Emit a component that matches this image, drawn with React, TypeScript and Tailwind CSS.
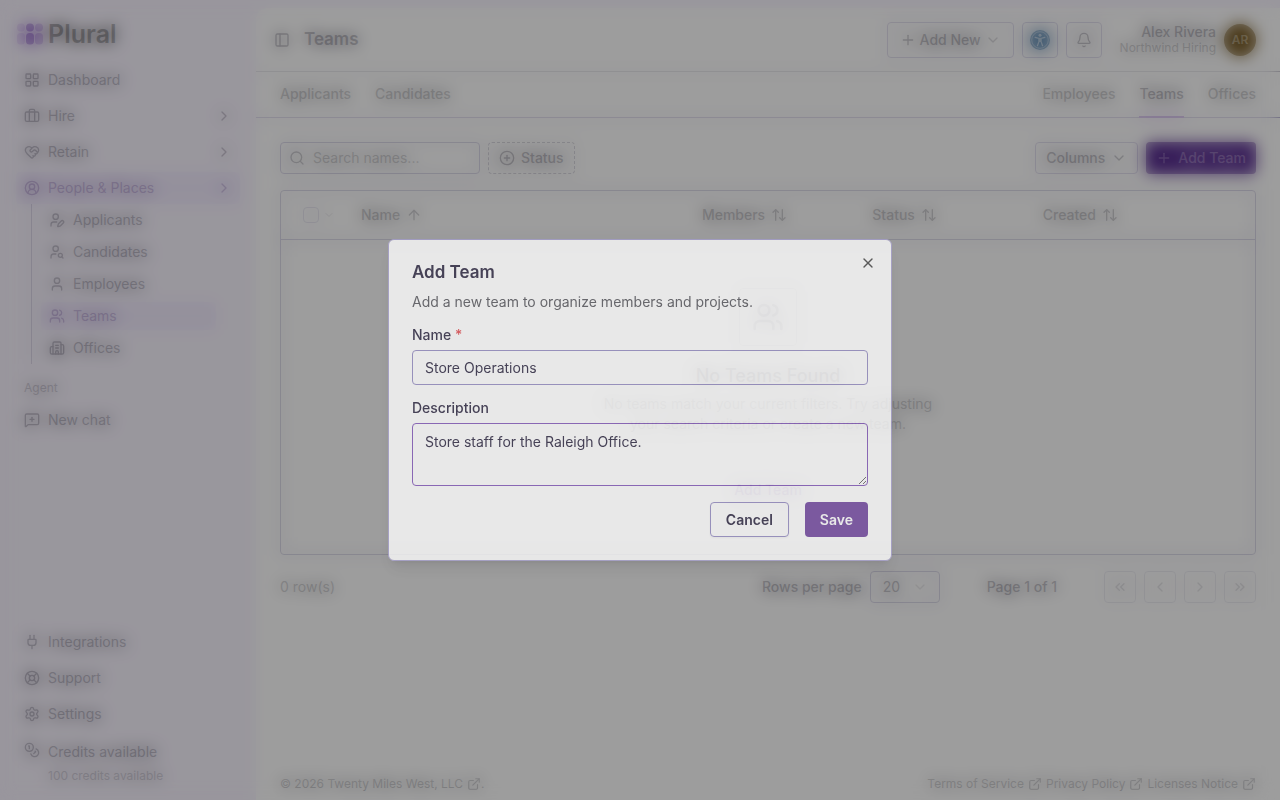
import type { ReactNode } from 'react'
import {
    ArrowUp,
    ArrowUpDown,
    Bell,
    Briefcase,
    Building2,
    ChevronDown,
    ChevronLeft,
    ChevronRight,
    ChevronsLeft,
    ChevronsRight,
    CirclePlus,
    CircleUserRound,
    Coins,
    ExternalLink,
    HeartHandshake,
    LayoutGrid,
    LifeBuoy,
    MessageSquarePlus,
    PanelLeft,
    Plug,
    Plus,
    Search,
    Settings,
    User,
    UserPen,
    UserSearch,
    Users,
    X,
    type LucideIcon,
} from 'lucide-react'

const mainNav = [
    { label: 'Dashboard', icon: LayoutGrid },
    { label: 'Hire', icon: Briefcase, expandable: true },
    { label: 'Retain', icon: HeartHandshake, expandable: true },
    { label: 'People & Places', icon: CircleUserRound, expandable: true, active: true },
]

const peopleNav = [
    { label: 'Applicants', icon: UserPen },
    { label: 'Candidates', icon: UserSearch },
    { label: 'Employees', icon: User },
    { label: 'Teams', icon: Users, active: true },
    { label: 'Offices', icon: Building2 },
]

const footerNav = [
    { label: 'Integrations', icon: Plug },
    { label: 'Support', icon: LifeBuoy },
    { label: 'Settings', icon: Settings },
]

export default function App() {
    return (
        <div className="flex min-h-screen bg-[#f8f4ff] font-['Inter',sans-serif] text-sm text-[#413d50]">
            <Sidebar />
            <div className="mt-2 flex min-w-0 flex-1 flex-col rounded-tl-xl bg-white">
                <Header />
                <TabBar />
                <main className="flex flex-1 flex-col px-6 pt-6">
                    <Toolbar />
                    <TeamsTable />
                    <Pagination />
                </main>
                <Footer />
            </div>

            {/* Overlay */}
            <div className="fixed inset-0 bg-black/50 opacity-[0.77] backdrop-blur-sm" />
            <AddTeamDialog />
        </div>
    )
}

function Sidebar() {
    return (
        <aside className="flex w-64 shrink-0 flex-col px-4 pb-3.5">
            <a href="#" className="flex h-16 items-center gap-1 pt-1 text-[#262626]">
                <LogoMark />
                <span className="text-[25px] leading-8 font-semibold">Plural</span>
            </a>
            <nav className="flex flex-col gap-1">
                {mainNav.map((item) => (
                    <NavItem key={item.label} {...item} />
                ))}
            </nav>
            <nav className="mr-4 ml-[15px] flex flex-col gap-1 border-l border-[#8f88a8] py-0.5 pr-2 pl-[9px]">
                {peopleNav.map(({ label, icon: Icon, active }) => (
                    <a
                        key={label}
                        href="#"
                        className={`flex h-7 items-center gap-2 rounded px-2 ${active ? 'bg-[#f0eafd] text-[#6f4a9c]' : ''}`}
                    >
                        <Icon className="size-4" />
                        {label}
                    </a>
                ))}
            </nav>
            <div className="mt-2 flex h-8 items-center px-2 text-xs text-[#6a6675]">Agent</div>
            <NavItem label="New chat" icon={MessageSquarePlus} />
            <div className="mt-auto flex flex-col gap-1">
                {footerNav.map((item) => (
                    <NavItem key={item.label} {...item} />
                ))}
                <a href="#" className="flex gap-2 px-2 pt-2">
                    <Coins className="size-4" />
                    <span className="flex flex-col gap-1">
                        <span className="leading-5">Credits available</span>
                        <span className="text-xs leading-5 text-[#7a7684]">100 credits available</span>
                    </span>
                </a>
            </div>
        </aside>
    )
}

function NavItem({ label, icon: Icon, expandable, active }: {
    label: string
    icon: LucideIcon
    expandable?: boolean
    active?: boolean
}) {
    return (
        <a
            href="#"
            className={`flex h-8 items-center gap-2 rounded px-2 ${active ? 'bg-[#f0eafd] text-[#6f4a9c]' : ''}`}
        >
            <Icon className="size-4" />
            <span className="flex-1">{label}</span>
            {expandable && <ChevronRight className="size-4" />}
        </a>
    )
}

function LogoMark() {
    return (
        <svg viewBox="0 0 28 22" className="h-[22px] w-7" aria-hidden="true">
            <g fill="#d3b8f0">
                <circle cx="5" cy="4.5" r="4" />
                <rect x="1" y="10" width="8" height="11.5" rx="3.5" />
            </g>
            <g fill="#b08be0">
                <circle cx="23" cy="4.5" r="4" />
                <rect x="19" y="10" width="8" height="11.5" rx="3.5" />
            </g>
            <g fill="#6a2fb0">
                <circle cx="14" cy="4.5" r="4" />
                <rect x="10" y="10" width="8" height="11.5" rx="3.5" />
            </g>
        </svg>
    )
}

function Header() {
    return (
        <header className="flex h-16 items-center gap-2 border-b border-[#b3b1be] pr-6 pl-[18px]">
            <button type="button" aria-label="Toggle sidebar" className="flex w-4 justify-center">
                <PanelLeft className="size-4" />
            </button>
            <h1 className="ml-1.5 flex-1 text-[17px] font-semibold">Teams</h1>
            <button type="button" className="flex h-9 items-center gap-1 rounded border border-[#968fc0] px-3 font-medium">
                <Plus className="size-4 shrink-0" />
                Add New
                <ChevronDown className="size-4 shrink-0 opacity-70" />
            </button>
            <button type="button" aria-label="Accessibility" className="flex size-9 items-center justify-center rounded border border-[#968fc0]">
                <svg viewBox="0 0 20 20" className="size-5" aria-hidden="true">
                    <circle cx="10" cy="10" r="10" fill="#0c4f8c" />
                    <circle cx="10" cy="10" r="8.3" fill="none" stroke="#d5e4f2" strokeWidth="0.7" />
                    <circle cx="10" cy="5.2" r="1.5" fill="#fff" />
                    <path d="M5.2 7.4l3.6 1h2.4l3.6-1M8.9 8.6v3l-1.4 4M11.1 8.6v3l1.4 4M10 8.6v3" fill="none" stroke="#fff" strokeWidth="1.3" strokeLinecap="round" strokeLinejoin="round" />
                </svg>
            </button>
            <button type="button" aria-label="Notifications" className="flex size-9 items-center justify-center rounded border border-[#968fc0]">
                <Bell className="size-4" />
            </button>
            <div className="ml-2.5 text-right">
                <div className="leading-4 font-medium">Alex Rivera</div>
                <div className="text-xs leading-4 text-[#6b6b73]">Northwind Hiring</div>
            </div>
            <button type="button" className="flex size-8 items-center justify-center rounded-full bg-[#5e3e00] text-xs font-semibold text-white">
                AR
            </button>
        </header>
    )
}

function TabLink({ children, active }: { children: ReactNode; active?: boolean }) {
    return (
        <a
            href="#"
            className={`-mb-px flex items-center border-b-2 ${active ? 'border-[#8a4fd0] text-[#413d50]' : 'border-transparent'}`}
        >
            {children}
        </a>
    )
}

function TabBar() {
    return (
        <nav className="flex h-[46px] justify-between border-b border-[#968fc0] px-6 font-medium text-[#6b6b73]">
            <div className="flex gap-6">
                <TabLink>Applicants</TabLink>
                <TabLink>Candidates</TabLink>
            </div>
            <div className="flex gap-6">
                <TabLink>Employees</TabLink>
                <TabLink active>Teams</TabLink>
                <TabLink>Offices</TabLink>
            </div>
        </nav>
    )
}

function Toolbar() {
    return (
        <div className="flex items-center gap-2 font-medium">
            <label className="flex h-8 w-[200px] items-center gap-2 rounded border border-[#7f78ac] px-2 font-normal">
                <Search className="size-4 shrink-0 text-[#55525f]" />
                <input
                    type="search"
                    aria-label="Search names"
                    placeholder="Search names..."
                    className="w-full min-w-0 bg-transparent outline-none placeholder:text-[#6b6b73]"
                />
            </label>
            <button type="button" className="flex h-8 items-center gap-1.5 rounded border border-dashed border-[#706b88] px-2.5">
                <CirclePlus className="size-4" />
                Status
            </button>
            <button type="button" className="ml-auto flex h-8 items-center gap-1.5 rounded border border-[#968fc0] px-2.5">
                Columns
                <ChevronDown className="size-4" />
            </button>
            <button type="button" className="flex h-8 items-center gap-1.5 rounded bg-[#51248a] px-2.5 text-[#e6dcf2]">
                <Plus className="size-4" />
                Add Team
            </button>
        </div>
    )
}

function SortHeader({ label, icon }: { label: string; icon: ReactNode }) {
    return (
        <th className="px-4 text-left font-medium">
            <button type="button" className="flex items-center gap-1.5">
                {label}
                {icon}
            </button>
        </th>
    )
}

function TeamsTable() {
    return (
        <div className="mt-4 rounded border border-[#7f78ac]">
            <table className="w-full table-fixed">
                <colgroup>
                    <col className="w-16" />
                    <col className="w-[35%]" />
                    <col className="w-[17.5%]" />
                    <col className="w-[17.5%]" />
                    <col />
                </colgroup>
                <thead>
                    <tr className="h-12 border-b border-[#7f78ac] text-[#5d5b66]">
                        <th className="pl-[22px]">
                            <span className="flex items-center gap-1">
                                <input
                                    type="checkbox"
                                    aria-label="Select all rows"
                                    className="size-4 shrink-0 appearance-none rounded border border-[#b3adcf]"
                                />
                                <ChevronDown className="size-3 opacity-50" />
                            </span>
                        </th>
                        <SortHeader label="Name" icon={<ArrowUp className="size-4" />} />
                        <SortHeader label="Members" icon={<ArrowUpDown className="size-4" />} />
                        <SortHeader label="Status" icon={<ArrowUpDown className="size-4" />} />
                        <SortHeader label="Created" icon={<ArrowUpDown className="size-4" />} />
                    </tr>
                </thead>
                <tbody>
                    <tr>
                        <td colSpan={5} className="p-12">
                            <div className="flex flex-col items-center text-center">
                                <div className="flex size-[58px] items-center justify-center rounded border border-[#aaa6bb] text-[#77748a]">
                                    <Users className="size-8" />
                                </div>
                                <h2 className="mt-4 text-lg leading-7 font-medium">No Teams Found</h2>
                                <p className="mt-1 max-w-[340px] leading-5 text-[#6b6b73]">
                                    No teams match your current filters. Try adjusting your search criteria or create a new team.
                                </p>
                                <button type="button" className="mt-10 h-8 font-medium text-[#6430a8]">
                                    Add Team
                                </button>
                            </div>
                        </td>
                    </tr>
                </tbody>
            </table>
        </div>
    )
}

function PageButton({ label, icon: Icon }: { label: string; icon: LucideIcon }) {
    return (
        <button
            type="button"
            disabled
            aria-label={label}
            className="flex size-8 items-center justify-center rounded border border-[#8a84ac] opacity-50"
        >
            <Icon className="size-4" />
        </button>
    )
}

function Pagination() {
    return (
        <div className="mt-4 flex items-center font-medium">
            <span className="flex-1 font-normal text-[#6b6b73]">0 row(s)</span>
            <label htmlFor="page-size" className="mr-2">Rows per page</label>
            <span className="relative flex items-center">
                <select
                    id="page-size"
                    defaultValue="20"
                    className="h-8 w-[70px] appearance-none rounded border border-[#7f78ac] px-3 font-normal"
                >
                    <option>10</option>
                    <option>20</option>
                    <option>50</option>
                </select>
                <ChevronDown className="pointer-events-none absolute right-3 size-4 opacity-40" />
            </span>
            <span className="mx-[47px]">Page 1 of 1</span>
            <div className="flex gap-2">
                <PageButton label="First page" icon={ChevronsLeft} />
                <PageButton label="Previous page" icon={ChevronLeft} />
                <PageButton label="Next page" icon={ChevronRight} />
                <PageButton label="Last page" icon={ChevronsRight} />
            </div>
        </div>
    )
}

function FooterLink({ children }: { children: ReactNode }) {
    return (
        <a href="#" className="flex items-center gap-1">
            {children}
            <ExternalLink className="size-3.5" />
        </a>
    )
}

function Footer() {
    return (
        <footer className="flex h-8 items-center gap-1 px-6 text-xs text-[#6b6b73]">
            <span className="mr-auto flex items-center">
                ©&nbsp;2026&nbsp;
                <FooterLink>Twenty Miles West, LLC</FooterLink>.
            </span>
            <FooterLink>Terms of Service</FooterLink>
            <FooterLink>Privacy Policy</FooterLink>
            <FooterLink>Licenses Notice</FooterLink>
        </footer>
    )
}

function AddTeamDialog() {
    return (
        <div className="fixed inset-0 flex items-center justify-center p-4">
            <form
                role="dialog"
                aria-labelledby="dialog-title"
                className="relative w-full max-w-[504px] rounded-md border border-[#a9a2d0] bg-white p-[23px] text-[#2b2540] opacity-[0.76] shadow-lg"
            >
                <h2 id="dialog-title" className="text-[17px] leading-[18px] font-semibold">Add Team</h2>
                <p className="mt-[11px] leading-5 text-[#56565c]">Add a new team to organize members and projects.</p>

                <label htmlFor="team-name" className="mt-4 block leading-[14px] font-medium">
                    Name <span className="text-[#e5484d]">*</span>
                </label>
                <input
                    id="team-name"
                    type="text"
                    defaultValue="Store Operations"
                    className="mt-2 block h-[35px] w-full rounded border border-[#958cc4] px-3 outline-none"
                />

                <label htmlFor="team-description" className="mt-4 block leading-[14px] font-medium">Description</label>
                <textarea
                    id="team-description"
                    defaultValue="Store staff for the Raleigh Office."
                    className="mt-2 block h-[63px] w-full resize-y rounded border border-[#8256bb] px-3 py-2 leading-5 outline-none"
                />

                <div className="mt-4 flex justify-end gap-4 font-semibold">
                    <button type="button" className="h-[35px] rounded border border-[#958cc4] px-[15px] shadow-xs">Cancel</button>
                    <button type="submit" className="h-[35px] rounded bg-[#7044a0] px-[15px] text-white">Save</button>
                </div>

                <button type="button" aria-label="Close" className="absolute top-[15px] right-[15px] text-[#444]">
                    <X className="size-4" />
                </button>
            </form>
        </div>
    )
}
